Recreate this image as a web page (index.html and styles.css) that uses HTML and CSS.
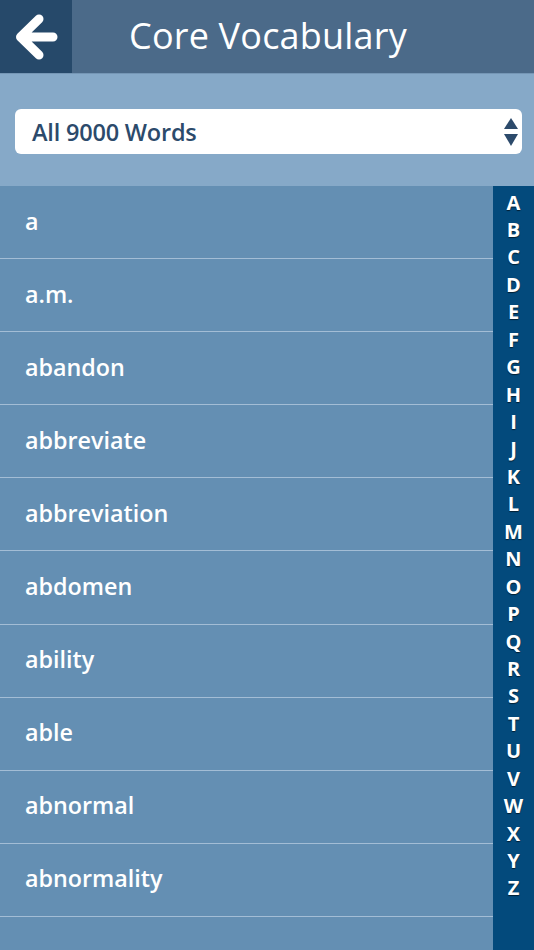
FILE: index.html
```html
<!DOCTYPE html>
<html>
<head>
<meta charset="utf-8">
<link rel="stylesheet" href="styles.css">
</head>
<body>
<div class="app">
  <header class="header">
    <div class="back">
      <svg width="72" height="73" viewBox="0 0 72 73">
        <path d="M39 19 L20.5 37 L39 55 M21.5 37 H53" fill="none" stroke="#fff" stroke-width="9" stroke-linecap="round" stroke-linejoin="round"/>
      </svg>
    </div>
    <h1 class="title">Core Vocabulary</h1>
  </header>
  <div class="filter">
    <div class="select">
      <span class="select-text">All 9000 Words</span>
      <svg class="select-arrows" width="16" height="32" viewBox="0 0 16 32">
        <path d="M8 1 L15 12 H1 Z" fill="#2c4a6b"/>
        <path d="M1 17 H15 L8 29 Z" fill="#2c4a6b"/>
      </svg>
    </div>
  </div>
  <div class="content">
    <ul class="list">
      <li class="row">a</li>
      <li class="row">a.m.</li>
      <li class="row">abandon</li>
      <li class="row">abbreviate</li>
      <li class="row">abbreviation</li>
      <li class="row">abdomen</li>
      <li class="row">ability</li>
      <li class="row">able</li>
      <li class="row">abnormal</li>
      <li class="row">abnormality</li>
    </ul>
    <div class="index">
      <span>A</span><span>B</span><span>C</span><span>D</span><span>E</span><span>F</span><span>G</span><span>H</span><span>I</span><span>J</span><span>K</span><span>L</span><span>M</span><span>N</span><span>O</span><span>P</span><span>Q</span><span>R</span><span>S</span><span>T</span><span>U</span><span>V</span><span>W</span><span>X</span><span>Y</span><span>Z</span>
    </div>
  </div>
</div>
</body>
</html>
```

FILE: styles.css
```css
* { box-sizing: border-box; }
html, body { margin: 0; padding: 0; }
body {
  width: 534px;
  height: 950px;
  overflow: hidden;
  font-family: "Open Sans", "DejaVu Sans", sans-serif;
  background: #648fb3;
}
.app { width: 534px; height: 950px; display: flex; flex-direction: column; }
.header {
  height: 74px;
  flex: none;
  display: flex;
  align-items: stretch;
  background: #4b6a89;
  border-bottom: 1px solid #7596b5;
}
.back {
  width: 72px;
  background: #26496a;
  display: flex;
  align-items: center;
  justify-content: center;
}
.back svg { display: block; }
.title {
  margin: 0;
  padding-left: 57px;
  font-weight: 400;
  font-size: 36px;
  color: #fff;
  line-height: 71px;
  letter-spacing: 0.2px;
}
.filter {
  height: 112px;
  flex: none;
  background: #86a9c8;
  padding: 35px 12px 0 15px;
}
.select {
  height: 45px;
  background: #fff;
  border-radius: 6px;
  display: flex;
  align-items: center;
  justify-content: space-between;
  padding: 0 3px 0 17px;
}
.select-text {
  font-weight: 600;
  font-size: 23.5px;
  color: #2c4a6b;
  letter-spacing: -0.2px;
}
.select-arrows { display: block; margin-top: 2px; }
.content {
  flex: 1;
  display: flex;
  overflow: hidden;
}
.list {
  flex: 1;
  margin: 0;
  padding: 0;
  list-style: none;
}
.row {
  height: 73.1px;
  border-bottom: 1.5px solid #a3bdd5;
  padding-left: 25px;
  display: flex;
  align-items: center;
  color: #fff;
  font-weight: 600;
  font-size: 23.3px;
  padding-bottom: 3px;
}
.index {
  width: 41px;
  flex: none;
  background: #034a7c;
  display: flex;
  flex-direction: column;
  align-items: center;
  padding-top: 2.5px;
}
.index span {
  display: block;
  color: #fff;
  font-weight: 700;
  font-size: 20px;
  line-height: 27.44px;
  height: 27.44px;
  text-shadow: 0 1px 1px rgba(0,0,0,0.6);
}
```
